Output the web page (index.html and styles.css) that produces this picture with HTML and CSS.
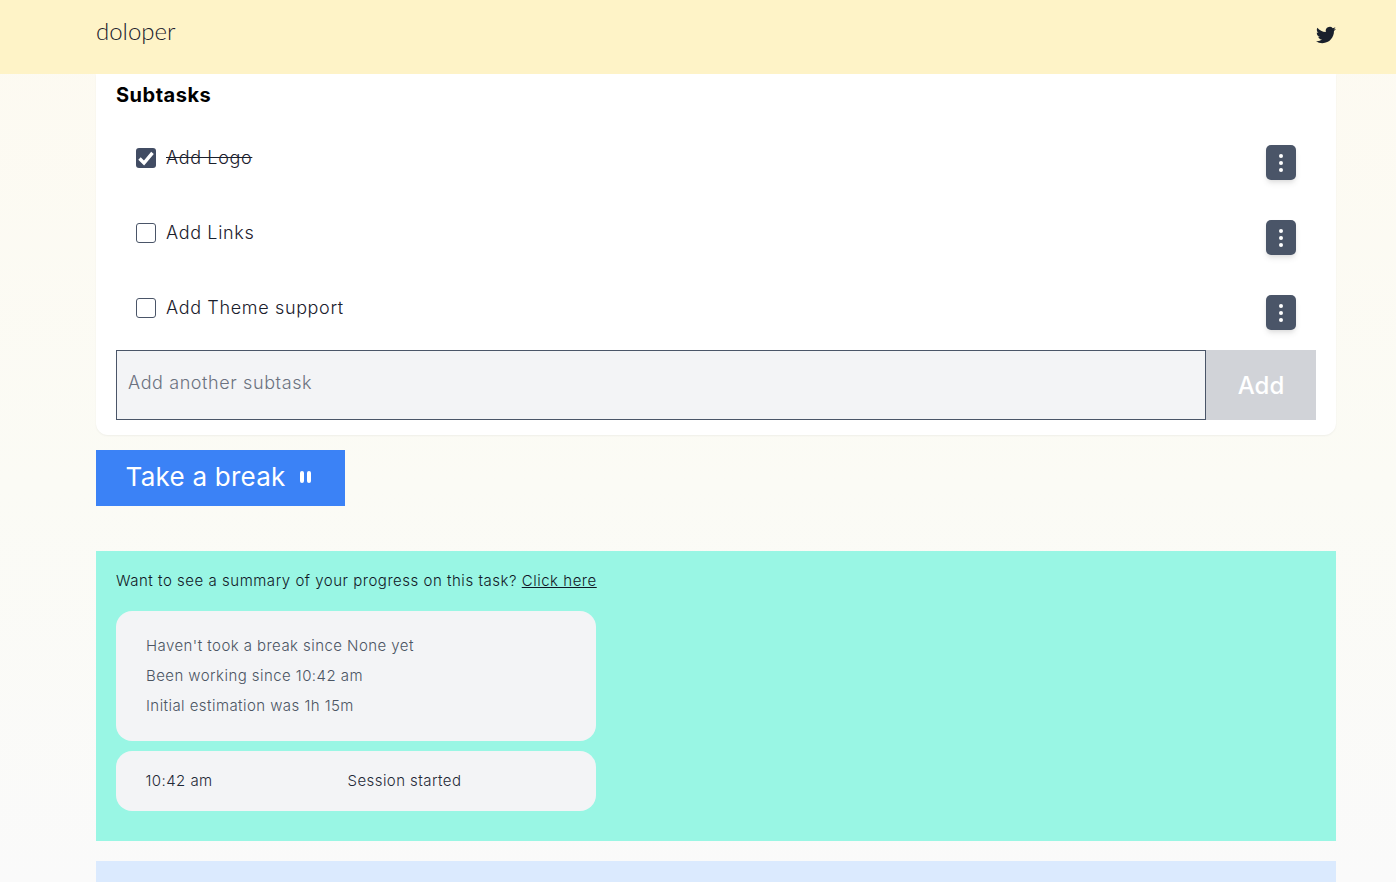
FILE: index.html
```html
<!DOCTYPE html>
<html lang="en">
<head>
<meta charset="utf-8">
<title>doloper</title>
<link rel="stylesheet" href="styles.css">
</head>
<body>
<header class="topbar">
  <span class="logo">doloper</span>
  <a class="twitter" href="#" aria-label="Twitter">
    <svg viewBox="0 0 24 24" width="20" height="20"><path fill="#1a202c" d="M23.95 4.57a10 10 0 0 1-2.82.77 4.96 4.96 0 0 0 2.16-2.72c-.95.55-2 .96-3.13 1.2a4.92 4.92 0 0 0-8.38 4.48C7.69 8.1 4.07 6.13 1.64 3.16a4.82 4.82 0 0 0-.66 2.47c0 1.71.87 3.21 2.19 4.1a4.9 4.9 0 0 1-2.23-.62v.06a4.92 4.92 0 0 0 3.95 4.83 5 5 0 0 1-2.21.08 4.94 4.94 0 0 0 4.6 3.42A9.87 9.87 0 0 1 0 19.54a14 14 0 0 0 7.56 2.21c9.05 0 14-7.5 14-13.98 0-.21 0-.42-.02-.63A9.94 9.94 0 0 0 24 4.59z"/></svg>
  </a>
</header>
<main class="content">
  <section class="card">
    <h2 class="card-title">Subtasks</h2>
    <ul class="subtasks">
      <li class="subtask">
        <label class="check-label">
          <span class="box box-on"><svg viewBox="0 0 20 20" width="20" height="20"><path d="M3.5 10.5l4.5 4.5L16.5 4.8" fill="none" stroke="#fff" stroke-width="3.4"/></svg></span>
          <span class="done">Add Logo</span>
        </label>
        <button class="kebab" aria-label="Options"><i></i><i></i><i></i></button>
      </li>
      <li class="subtask">
        <label class="check-label"><span class="box"></span><span>Add Links</span></label>
        <button class="kebab" aria-label="Options"><i></i><i></i><i></i></button>
      </li>
      <li class="subtask">
        <label class="check-label"><span class="box"></span><span>Add Theme support</span></label>
        <button class="kebab" aria-label="Options"><i></i><i></i><i></i></button>
      </li>
    </ul>
    <form class="add-row">
      <input class="add-input" placeholder="Add another subtask">
      <button class="add-btn" type="button">Add</button>
    </form>
  </section>
  <button class="break-btn"><span class="break-label">Take a break</span> <span class="pause"><i></i><i></i></span></button>
  <section class="summary">
    <p class="summary-text">Want to see a summary of your progress on this task? <a href="#">Click here</a></p>
    <div class="panel stats">
      <p>Haven't took a break since None yet</p>
      <p>Been working since 10:42 am</p>
      <p>Initial estimation was 1h 15m</p>
    </div>
    <div class="panel log">
      <span class="log-time">10:42 am</span>
      <span>Session started</span>
    </div>
  </section>
  <section class="next"></section>
</main>
</body>
</html>
```
FILE: styles.css
```css
* { box-sizing: border-box; }
html, body { margin: 0; height: 882px; overflow: hidden; }
body {
  font-family: "Inter", "Liberation Sans", sans-serif;
  background: linear-gradient(to bottom, #fdfaf1 0, #fbfbf5 55%, #fafafa 100%);
  color: #000;
}
.topbar {
  height: 74px;
  background: #fef3c7;
  display: flex;
  align-items: center;
  justify-content: space-between;
  padding: 0 60px 6px 96px;
}
.logo { font-family: "Lato", sans-serif; font-weight: 300; font-size: 24px; line-height: 30px; color: #1a202c; margin-bottom: 6px; }
.twitter { display: flex; margin-top: 1px; }
.content { padding: 0 60px 0 96px; }
.card {
  background: #fff;
  border-radius: 0 0 12px 12px;
  box-shadow: 0 1px 2px rgba(0,0,0,.05);
  padding: 9px 20px 15px;
}
.card-title { margin: 0; font-size: 20px; font-weight: 700; line-height: 24px; letter-spacing: .5px; }
.subtasks { list-style: none; margin: 18px 0 0; padding: 0; }
.subtask {
  height: 75px;
  display: flex;
  justify-content: space-between;
  align-items: flex-start;
  padding: 19px 20px 0;
}
.check-label { display: flex; align-items: center; gap: 10px; font-size: 18px; line-height: 28px; letter-spacing: .65px; color: #1a202c; font-weight: 300; }
.box { width: 20px; height: 20px; border: 1px solid #4a5568; border-radius: 3px; display: block; background: #fff; }
.box-on { border: 0; background: #414c63; }
.box svg { display: block; }
.done { text-decoration: line-through; }
.kebab {
  width: 30px; height: 35px;
  margin-top: 1px;
  border: 0; border-radius: 5px;
  background: #4a5568;
  box-shadow: 0 4px 6px -1px rgba(0,0,0,.1), 0 2px 4px -1px rgba(0,0,0,.06);
  display: flex; flex-direction: column; align-items: center; justify-content: center; gap: 3px;
  padding: 0;
}
.kebab i { width: 4px; height: 4px; border-radius: 50%; background: #fff; display: block; }
.add-row { display: flex; height: 70px; }
.add-input {
  flex: 1;
  background: #f3f4f6;
  border: 1px solid #4a5568;
  padding: 0 11px 5px;
  font: inherit; font-size: 18px; font-weight: 300; letter-spacing: .6px;
}
.add-input::placeholder { color: #6b7280; opacity: 1; }
.add-btn {
  width: 110px; border: 0; background: #d1d3d8; color: #fff;
  font: inherit; font-size: 24px; font-weight: 500;
}
.break-btn {
  display: flex; align-items: center; gap: 14px;
  height: 56px; width: 249px;
  margin-top: 15px;
  padding: 0 30px 3px 29.5px;
  border: 0; background: #3b82f6; color: #fff;
  font: inherit; font-size: 26px; font-weight: 400; letter-spacing: .25px;
}
.pause { display: flex; gap: 3px; }
.pause i { width: 4px; height: 12px; border-radius: 2px; background: #fff; display: block; }
.summary {
  margin-top: 45px;
  height: 290px;
  background: #99f6e4;
  padding: 20px;
}
.summary-text { margin: 0; font-size: 15px; font-weight: 300; line-height: 20px; letter-spacing: .52px; color: #111827; }
.summary-text a { color: inherit; }
.panel { width: 480px; background: #f3f4f6; border-radius: 16px; font-size: 15px; font-weight: 300; letter-spacing: .44px; }
.stats { margin-top: 20px; height: 130px; padding: 20px 30px; color: #4b5563; line-height: 30px; }
.stats p { margin: 0; }
.log { margin-top: 10px; height: 60px; padding: 0 29.5px 2px; display: flex; align-items: center; color: #1f2937; }
.log-time { width: 202px; }
.next { margin-top: 20px; height: 40px; background: #dbeafe; }
```
